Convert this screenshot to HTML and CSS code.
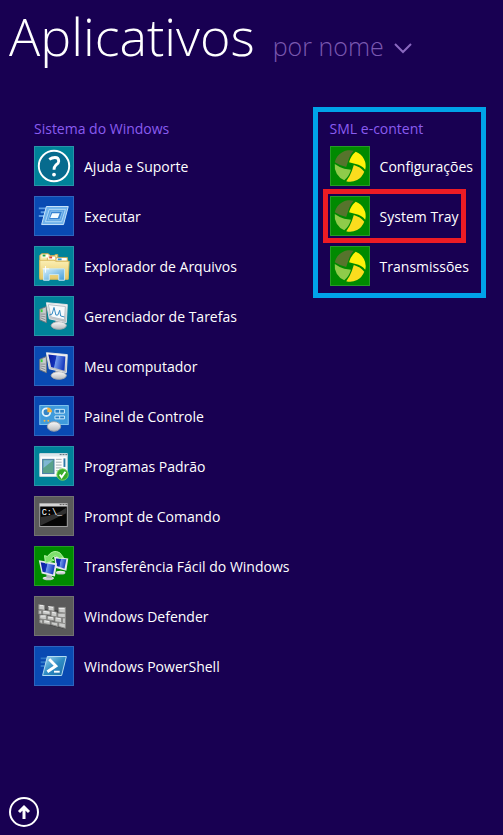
FILE: index.html
```html
<!DOCTYPE html>
<html lang="pt-BR">
<head>
    <meta charset="UTF-8">
    <meta name="viewport" content="width=device-width, initial-scale=1.0">
    <title>Aplicativos</title>
    <link rel="stylesheet" href="styles.css">
</head>
<body>
    <!-- Shared gradients and symbols -->
    <svg class="defs" width="0" height="0" aria-hidden="true">
        <defs>
            <linearGradient id="screen" x1="0" y1="0" x2="1" y2="0.2">
                <stop offset="0" stop-color="#0a1c9c"/>
                <stop offset="0.45" stop-color="#1230b8"/>
                <stop offset="0.5" stop-color="#6f98ec"/>
                <stop offset="1" stop-color="#1a3cc0"/>
            </linearGradient>
            <linearGradient id="metal" x1="0" y1="0" x2="0" y2="1">
                <stop offset="0" stop-color="#fafafa"/>
                <stop offset="1" stop-color="#b4b8bc"/>
            </linearGradient>
            <linearGradient id="folder" x1="0" y1="0" x2="0" y2="1">
                <stop offset="0" stop-color="#fbefb4"/>
                <stop offset="1" stop-color="#e6c867"/>
            </linearGradient>
            <linearGradient id="glass" x1="0" y1="0" x2="1" y2="1">
                <stop offset="0" stop-color="#d8f0fb"/>
                <stop offset="1" stop-color="#3f9bd8"/>
            </linearGradient>
            <linearGradient id="shell" x1="0" y1="0" x2="1" y2="1">
                <stop offset="0" stop-color="#a9dcf2"/>
                <stop offset="0.5" stop-color="#2f8cc4"/>
                <stop offset="1" stop-color="#1d6ca6"/>
            </linearGradient>
        </defs>
        <symbol id="sml" viewBox="0 0 40 40">
            <path fill="#56742c" d="M4 16A16 16 0 0 1 24 4Q20 8 18 15L16 21Q10 20 4 16Z"/>
            <path fill="#fff10a" d="M26 5A16 16 0 0 1 36 24Q32 19 26 18L19 16Q21 9 26 5Z"/>
            <path fill="#fbdc1e" d="M35 26A16 16 0 0 1 16 36Q20 31 22 25L24 19Q31 21 35 26Z"/>
            <path fill="#8fcb4a" d="M14 35A16 16 0 0 1 4 18Q8 21 14 23L21 24Q19 31 14 35Z"/>
        </symbol>
        <symbol id="pc" viewBox="0 0 40 40">
            <path fill="#c9ccce" stroke="#70777c" d="M5 13L12 10V27L5 24Z"/>
            <path stroke="#858b90" d="M6 18L11 18M6 20L11 21M6 22L11 24"/>
            <path fill="#3ad23a" d="M6 13H8V16H6Z"/>
            <path fill="#a9adb0" d="M22 24L28 25L28 29H21Z"/>
            <ellipse cx="25" cy="30" rx="8" ry="4" fill="url(#metal)" stroke="#a2a6aa"/>
            <path fill="url(#metal)" stroke="#dfe2e4" d="M12 6L34 8L33 27L15 23Z"/>
        </symbol>
    </svg>

    <header class="header">
        <h1>Aplicativos</h1>
        <button type="button" class="sort">
            por nome
            <svg width="18" height="14" viewBox="0 0 18 14" aria-hidden="true"><path d="M1 2L9 10L17 2"/></svg>
        </button>
    </header>

    <main class="groups">
        <section class="group">
            <h2>Sistema do Windows</h2>
            <ul>
                <li><a href="#" class="app">
                    <svg class="tile teal" viewBox="0 0 40 40">
                        <circle cx="20" cy="20" r="16" fill="#076b8e" stroke="#fff" stroke-width="2"/>
                        <path fill="none" stroke="#fff" stroke-width="3" d="M15 13Q18 11 21 11Q25 11 25 15Q25 17 22 19Q20 21 20 24"/>
                        <circle cx="20" cy="29" r="2" fill="#fff"/>
                    </svg>
                    <span>Ajuda e Suporte</span>
                </a></li>
                <li><a href="#" class="app">
                    <svg class="tile blue" viewBox="0 0 40 40">
                        <path stroke="#5c9ce4" stroke-width="2" d="M4 12H12M6 16H12M4 20H10"/>
                        <path fill="#6fb2ec" stroke="#cfe8fb" d="M12 10H35L30 29H7Z"/>
                        <path fill="#5da4e4" stroke="#b5dbf8" d="M15 13H32L28 26H11Z"/>
                        <path fill="#3582d2" stroke="#8dc4f0" d="M17 15H29L26 24H14Z"/>
                        <path fill="#f4fbff" d="M18 17H26L24 22H16Z"/>
                    </svg>
                    <span>Executar</span>
                </a></li>
                <li><a href="#" class="app">
                    <svg class="tile teal" viewBox="0 0 40 40">
                        <path fill="#f6e7a6" stroke="#c8a850" d="M5 32V9L7 7H14L16 9H20L22 8H24V32Z"/>
                        <path fill="#fff" d="M7 8H14V11H7Z"/>
                        <path fill="#25a53b" d="M8 8H11V10H8Z"/>
                        <path fill="#f8eab0" stroke="#c8a850" d="M13 12L15 10H21L23 12H34V32H13Z"/>
                        <path fill="#fff" d="M14 10H21V13H14Z"/>
                        <path fill="#d9482b" d="M15 10H18V12H15Z"/>
                        <path fill="#fff" stroke="#c8a850" d="M22 14V12L24 11H34V15H22Z"/>
                        <path fill="#2c8fd0" d="M24 12H28V14H24Z"/>
                        <path fill="url(#folder)" stroke="#d8b95c" d="M5 14H20L22 15H36L35 34H5Z"/>
                        <path fill="url(#glass)" stroke="#c7e9f8" d="M9 23H31V35H25V29H15V35H9Z"/>
                        <path stroke="#fff" d="M11 20V27M8 23H15"/>
                    </svg>
                    <span>Explorador de Arquivos</span>
                </a></li>
                <li><a href="#" class="app">
                    <svg class="tile teal" viewBox="0 0 40 40">
                        <use href="#pc"/>
                        <path fill="#f5fafc" stroke="#b5c0c6" d="M14 8L32 10L31 24L17 21Z"/>
                        <path fill="none" stroke="#2d86c0" d="M15 19L18 18L20 11L22 19L24 19L26 14L27 20L31 21"/>
                    </svg>
                    <span>Gerenciador de Tarefas</span>
                </a></li>
                <li><a href="#" class="app">
                    <svg class="tile blue" viewBox="0 0 40 40">
                        <use href="#pc"/>
                        <path fill="url(#screen)" d="M14 8L32 10L31 25L17 21Z"/>
                    </svg>
                    <span>Meu computador</span>
                </a></li>
                <li><a href="#" class="app">
                    <svg class="tile blue" viewBox="0 0 40 40">
                        <rect x="5" y="9" width="30" height="20" fill="#3f9bdc" stroke="#86c8f0"/>
                        <circle cx="12" cy="16" r="4" fill="#3486c8" stroke="#e0f3fd" stroke-width="2"/>
                        <path fill="#f6b13c" d="M13 16V11A5 5 0 0 1 18 16Z"/>
                        <path fill="#2b7fc4" stroke="#d5effc" d="M21 13H31V17H21ZM26 13V17M21 20H31V23H21ZM26 20V23"/>
                        <circle cx="10" cy="25" r="1" fill="#f6b13c"/>
                        <circle cx="14" cy="25" r="1" fill="#f6b13c"/>
                        <ellipse cx="20" cy="31" rx="7" ry="5" fill="url(#metal)" stroke="#9ba1a6"/>
                    </svg>
                    <span>Painel de Controle</span>
                </a></li>
                <li><a href="#" class="app">
                    <svg class="tile teal" viewBox="0 0 40 40">
                        <path fill="#fbfcfc" stroke="#c5d4da" d="M5 7H34V31H5Z"/>
                        <path fill="#dbe6ea" d="M5 7H34V10H5Z"/>
                        <path stroke="#50646e" stroke-dasharray="2 1" d="M26 8H34"/>
                        <rect x="8" y="13" width="12" height="15" fill="#5aa28a" stroke="#4578a4"/>
                        <path fill="#7fb7d4" d="M9 14H19L9 22Z"/>
                        <path stroke="#a0abb0" d="M22 13H28M22 16H28M22 19H28M22 22H28M22 25H26"/>
                        <path stroke="#2c7aa8" stroke-width="2" d="M31 12V21"/>
                        <circle cx="29" cy="29" r="6" fill="#38ab2a" stroke="#7cd660"/>
                        <path fill="none" stroke="#fff" stroke-width="2" d="M26 29L28 32L32 26"/>
                    </svg>
                    <span>Programas Padrão</span>
                </a></li>
                <li><a href="#" class="app">
                    <svg class="tile gray" viewBox="0 0 40 40">
                        <rect x="5" y="7" width="29" height="24" fill="#050505" stroke="#a8a8a8"/>
                        <path fill="#d5d5d5" d="M5 7H34V10H5Z"/>
                        <path stroke="#555" stroke-dasharray="2 1" d="M26 8H34"/>
                        <path fill="#303030" d="M6 21V30L33 17V11Q22 20 6 21Z"/>
                        <text x="7" y="19" class="prompt">C:\_</text>
                    </svg>
                    <span>Prompt de Comando</span>
                </a></li>
                <li><a href="#" class="app">
                    <svg class="tile green" viewBox="0 0 40 40">
                        <ellipse cx="27" cy="27" rx="5" ry="2" fill="url(#metal)"/>
                        <path fill="#e4e8ec" d="M20 10L35 12L33 25L22 22Z"/>
                        <path fill="url(#screen)" d="M22 12L33 13L31 23L23 20Z"/>
                        <ellipse cx="14" cy="33" rx="6" ry="2" fill="url(#metal)"/>
                        <path fill="#aeb4b8" d="M12 28H18V33H12Z"/>
                        <path fill="#e4e8ec" d="M4 14L23 17L21 31L7 28Z"/>
                        <path fill="url(#screen)" d="M6 16L21 19L19 29L8 26Z"/>
                        <path fill="#7ee06c" stroke="#b8f5a5" d="M10 9L13 10Q19 2 26 6L30 11L26 12Q21 7 17 12L20 14L11 17Z"/>
                    </svg>
                    <span>Transferência Fácil do Windows</span>
                </a></li>
                <li><a href="#" class="app">
                    <svg class="tile gray" viewBox="0 0 40 40">
                        <path fill="#404040" d="M4 12L32 15V34L5 27Z"/>
                        <g fill="#c9cac8" stroke="#8a8a88">
                            <path d="M4 8L10 9V14L4 13ZM14 10L20 10V15L14 14ZM25 11L32 11V17L25 16Z"/>
                            <path d="M4 14L7 14V18L4 18ZM8 14L16 15V19L8 18ZM17 15L23 16V21L17 20ZM24 17L32 17V22L24 21Z"/>
                            <path d="M5 19L12 19V24L5 23ZM13 20L20 21V25L13 24ZM21 21L28 22V27L21 26ZM29 22H32V28H29Z"/>
                            <path d="M5 24L8 24V28L5 27ZM9 24L16 25V29L9 28ZM25 27L32 28V33L25 31ZM17 26L24 27V31L17 29Z"/>
                        </g>
                        <path stroke="#efefef" d="M5 9L9 9M14 10L19 11M25 12H31M9 15L15 16M18 16L22 17M14 21L19 22M6 20L11 20M22 22L27 23M10 25L15 26"/>
                    </svg>
                    <span>Windows Defender</span>
                </a></li>
                <li><a href="#" class="app">
                    <svg class="tile blue" viewBox="0 0 40 40">
                        <path stroke="#2f78c8" stroke-width="2" d="M6 12H12M6 16H12M6 20H10"/>
                        <path fill="url(#shell)" stroke="#b9e2f4" d="M13 10H33L28 30H8Z"/>
                        <path fill="none" stroke="#fff" stroke-width="3" d="M15 13L22 20L13 26"/>
                        <path stroke="#fff" stroke-width="2" d="M20 26H26"/>
                    </svg>
                    <span>Windows PowerShell</span>
                </a></li>
            </ul>
        </section>

        <section class="group boxed">
            <h2>SML e-content</h2>
            <ul>
                <li><a href="#" class="app">
                    <svg class="tile green"><use href="#sml"/></svg>
                    <span>Configurações</span>
                </a></li>
                <li><a href="#" class="app marked">
                    <svg class="tile green"><use href="#sml"/></svg>
                    <span>System Tray</span>
                </a></li>
                <li><a href="#" class="app">
                    <svg class="tile green"><use href="#sml"/></svg>
                    <span>Transmissões</span>
                </a></li>
            </ul>
        </section>
    </main>

    <footer class="footer">
        <button type="button" class="up" aria-label="Voltar">
            <svg width="30" height="30" viewBox="0 0 30 30" aria-hidden="true">
                <circle cx="15" cy="15" r="14"/>
                <path class="arrow" d="M15 22V10M10 15L15 10L20 15"/>
            </svg>
        </button>
    </footer>
</body>
</html>
```
FILE: styles.css
```css
* {
    box-sizing: border-box;
}
body {
    display: flex;
    flex-direction: column;
    min-height: 100vh;
    margin: 0;
    background-color: #180052;
    color: #fff;
    font-family: "Open Sans", "Noto Sans", sans-serif;
    font-size: 14px;
}
button {
    padding: 0;
    border: none;
    background: none;
    color: inherit;
    font-family: inherit;
    cursor: pointer;
}
.defs {
    position: absolute;
}
.header {
    display: flex;
    align-items: baseline;
    gap: 18px;
    padding-left: 9px;
}
h1 {
    margin: 0;
    font-size: 52px;
    font-weight: 300;
    line-height: 72px;
}
.sort {
    color: #7a58b0;
    font-size: 25px;
    font-weight: 300;
}
.sort svg {
    margin-left: 4px;
    fill: none;
    stroke: #8a68c0;
    stroke-width: 2;
}
.groups {
    display: flex;
    justify-content: space-between;
    align-items: flex-start;
    padding: 35px 17px 0 34px;
}
.group {
    padding-top: 12px;
}
.group h2 {
    margin: 0 0 7px;
    color: #8a5cf0;
    font-size: 14px;
    font-weight: 400;
    line-height: 20px;
}
.group ul {
    display: flex;
    flex-direction: column;
    gap: 10px;
    margin: 0;
    padding: 0;
    list-style: none;
}
.group li {
    display: flex;
}
.app {
    display: flex;
    align-items: center;
    gap: 10px;
    color: #fff;
    text-decoration: none;
    white-space: nowrap;
}
.boxed {
    padding: 7px 8px 7px 12px;
    border: 5px solid #00a2e8;
}
.marked {
    outline: 5px solid #ed1c24;
    outline-offset: 2px;
}
.tile {
    width: 40px;
    height: 40px;
    border: 1px solid rgba(255, 255, 255, 0.15);
}
.teal {
    background-color: #008299;
}
.blue {
    background-color: #094ab2;
}
.gray {
    background-color: #5a5a5a;
}
.green {
    background-color: #008a00;
}
.prompt {
    fill: #fff;
    font-family: "Liberation Mono", monospace;
    font-size: 9px;
}
.footer {
    margin-top: auto;
    padding: 0 0 8px 9px;
}
.up,
.up svg {
    display: block;
}
.up svg {
    fill: none;
    stroke: #fff;
    stroke-width: 2;
}
.up .arrow {
    stroke-width: 3;
}
```
